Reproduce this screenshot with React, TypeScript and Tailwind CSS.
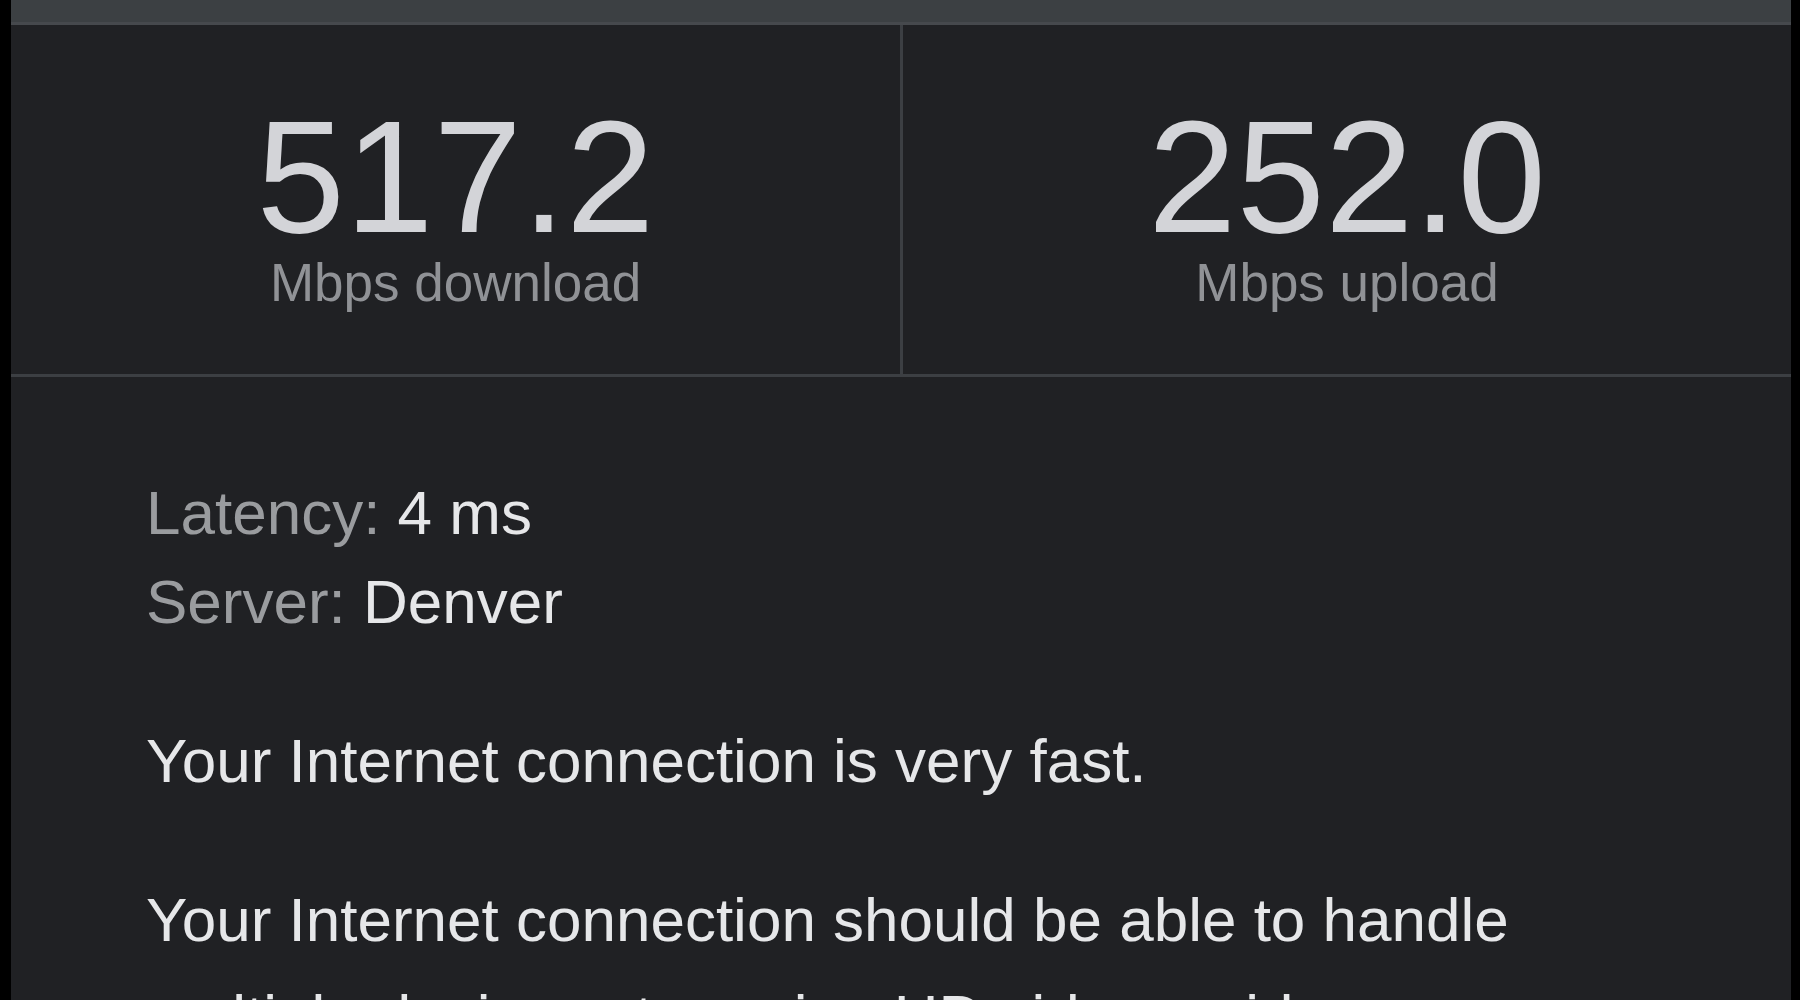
export default function App() {
  return (
    <div className="h-[1000px] w-[1800px] overflow-hidden bg-black flex font-['Liberation_Sans',Arial,sans-serif]">
      <div className="ml-[11px] w-[1780px] bg-[#202124] flex flex-col">
        <div className="h-[25px] shrink-0 bg-[#3c4043] border-b-[3px] border-[#46494d]" />
        <div className="grid grid-cols-[892px_1fr] border-b-[3px] border-[#3c3f43]">
          <div className="flex flex-col items-center pt-[82px] pb-[65px] border-r-[3px] border-[#3c3f43]">
            <div className="text-[159px] leading-[140px] text-[#d3d4d8]">517.2</div>
            <div className="mt-[9px] text-[53px] leading-none text-[#909296]">Mbps download</div>
          </div>
          <div className="flex flex-col items-center pt-[82px] pb-[65px]">
            <div className="text-[159px] leading-[140px] text-[#d3d4d8]">252.0</div>
            <div className="mt-[9px] text-[53px] leading-none text-[#909296]">Mbps upload</div>
          </div>
        </div>
        <div className="pt-[91px] px-[135px] text-[62px] leading-[89px]">
          <div>
            <div>
              <span className="text-[#9a9c9f]">Latency: </span>
              <span className="text-[#e6e7e9]">4 ms</span>
            </div>
            <div>
              <span className="text-[#9a9c9f]">Server: </span>
              <span className="text-[#e6e7e9]">Denver</span>
            </div>
          </div>
          <p className="mt-[70px] text-[#e6e7e9]">Your Internet connection is very fast.</p>
          <p className="mt-[66px] leading-[97px] text-[#e6e7e9]">
            Your Internet connection should be able to handle multiple devices streaming HD videos, video conferencing, and gaming at the same time.
          </p>
        </div>
      </div>
    </div>
  );
}
